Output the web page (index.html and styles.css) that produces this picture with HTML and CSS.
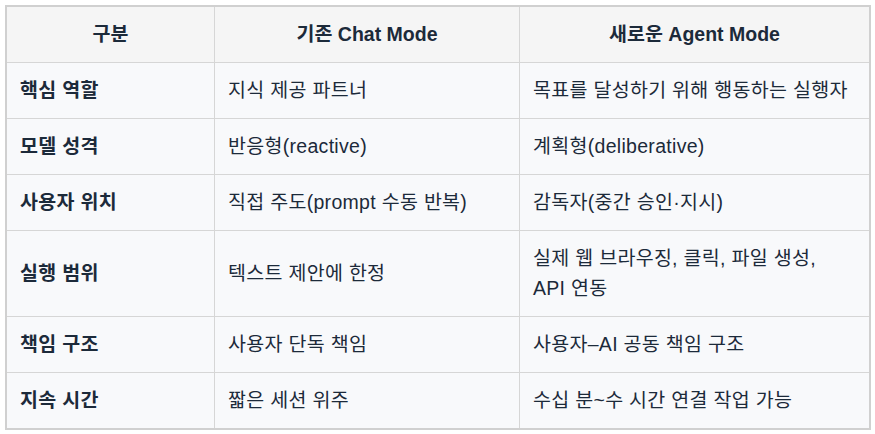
FILE: index.html
```html
<!DOCTYPE html>
<html lang="ko">
<head>
<meta charset="utf-8">
<link rel="stylesheet" href="styles.css">
</head>
<body>
<table class="compare">
  <colgroup>
    <col class="c1"><col class="c2"><col class="c3">
  </colgroup>
  <thead>
    <tr><th>구분</th><th>기존 Chat Mode</th><th>새로운 Agent Mode</th></tr>
  </thead>
  <tbody>
    <tr><td class="label">핵심 역할</td><td>지식 제공 파트너</td><td>목표를 달성하기 위해 행동하는 실행자</td></tr>
    <tr><td class="label">모델 성격</td><td>반응형(reactive)</td><td>계획형(deliberative)</td></tr>
    <tr><td class="label">사용자 위치</td><td>직접 주도(prompt 수동 반복)</td><td>감독자(중간 승인·지시)</td></tr>
    <tr><td class="label">실행 범위</td><td>텍스트 제안에 한정</td><td>실제 웹 브라우징, 클릭, 파일 생성,<br>API 연동</td></tr>
    <tr><td class="label">책임 구조</td><td>사용자 단독 책임</td><td>사용자–AI 공동 책임 구조</td></tr>
    <tr><td class="label">지속 시간</td><td>짧은 세션 위주</td><td>수십 분~수 시간 연결 작업 가능</td></tr>
  </tbody>
</table>
</body>
</html>
```
FILE: styles.css
```css
html, body {
  margin: 0;
  background: #ffffff;
}
body {
  padding: 5px;
  font-family: "Liberation Sans", Arial, "Noto Sans CJK KR", sans-serif;
  font-size: 19.5px;
  line-height: 30px;
  letter-spacing: 0.3px;
  color: #1c2a3a;
}
.compare {
  border-collapse: separate;
  border-spacing: 0;
  table-layout: fixed;
  width: 866px;
  border: 2px solid #d0d0d0;
}
.c1 { width: 208px; }
.c2 { width: 305px; }
.c3 { width: 349px; }
.compare th,
.compare td {
  box-sizing: border-box;
  padding: 12px 13px 13px;
  border-right: 1px solid #d6d6d6;
  border-bottom: 1px solid #d6d6d6;
  text-align: left;
  vertical-align: middle;
  background: #f8f9fb;
  font-weight: normal;
}
.compare th {
  background: #f5f5f5;
  text-align: center;
  font-weight: bold;
  letter-spacing: 0;
}
.compare tr > :last-child { border-right: 0; }
.compare tbody tr:last-child td { border-bottom: 0; }
.compare td.label { font-weight: bold; }
```
